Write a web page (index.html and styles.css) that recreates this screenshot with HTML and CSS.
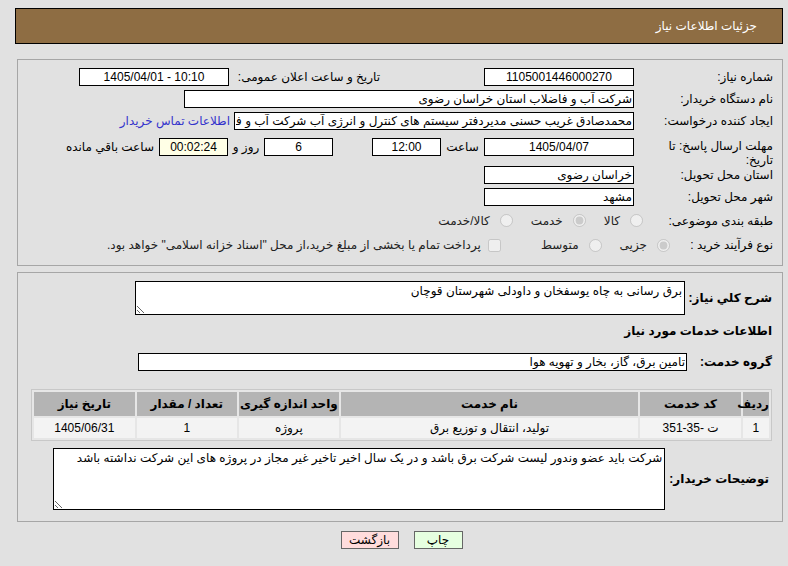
FILE: index.html
```html
<!DOCTYPE html>
<html lang="fa" dir="rtl">
<head>
    <meta charset="UTF-8">
    <title>جزئیات اطلاعات نیاز</title>
    <link rel="stylesheet" href="styles.css">
</head>
<body>
<div class="page">
    <div class="title-bar">جزئیات اطلاعات نیاز</div>

    <div class="panel info">
        <div class="row">
            <span class="lbl">شماره نیاز:</span>
            <input class="fld w150 center" value="1105001446000270" readonly>
            <span class="lbl2">تاریخ و ساعت اعلان عمومی:</span>
            <input class="fld w150 center" dir="ltr" value="1405/04/01 - 10:10" readonly>
        </div>
        <div class="row">
            <span class="lbl">نام دستگاه خریدار:</span>
            <input class="fld w450" value="شرکت آب و فاضلاب استان خراسان رضوی" readonly>
        </div>
        <div class="row">
            <span class="lbl">ایجاد کننده درخواست:</span>
            <input class="fld w400" value="محمدصادق غریب حسنی مدیردفتر سیستم های کنترل و انرژی آب شرکت آب و فاضلاب استان خراسان رضوی" readonly>
            <a class="contact" href="#">اطلاعات تماس خریدار</a>
        </div>
        <div class="row row-deadline">
            <span class="lbl">مهلت ارسال پاسخ: تا<br>تاریخ:</span>
            <input class="fld w150 center" value="1405/04/07" readonly>
            <span class="unit u-hour">ساعت</span>
            <input class="fld w68 center" value="12:00" readonly>
            <input class="fld w68 center gap-days" value="6" readonly>
            <span class="unit u-day">روز و</span>
            <input class="fld w68 center remain" value="00:02:24" readonly>
            <span class="unit u-left">ساعت باقي مانده</span>
        </div>
        <div class="row">
            <span class="lbl">استان محل تحویل:</span>
            <input class="fld w150" value="خراسان رضوی" readonly>
        </div>
        <div class="row">
            <span class="lbl">شهر محل تحویل:</span>
            <input class="fld w150" value="مشهد" readonly>
        </div>
        <div class="row row-radio">
            <span class="lbl lbl-cat">طبقه بندی موضوعی:</span>
            <label class="opt"><input type="radio" name="cat" disabled>کالا</label>
            <label class="opt"><input type="radio" name="cat" checked disabled>خدمت</label>
            <label class="opt"><input type="radio" name="cat" disabled>کالا/خدمت</label>
        </div>
        <div class="row row-radio last">
            <span class="lbl lbl-proc">نوع فرآیند خرید :</span>
            <label class="opt"><input type="radio" name="proc" checked disabled>جزیی</label>
            <label class="opt"><input type="radio" name="proc" disabled>متوسط</label>
            <label class="opt opt-check"><input type="checkbox" disabled>پرداخت تمام یا بخشی از مبلغ خرید،از محل "اسناد خزانه اسلامی" خواهد بود.</label>
        </div>
    </div>

    <div class="panel need">
        <div class="drow">
            <span class="blbl w-need">شرح کلي نیاز:</span>
            <textarea class="ta ta-need" readonly>برق رسانی به چاه یوسفخان و داودلی شهرستان قوچان</textarea>
        </div>
        <div class="subhead">اطلاعات خدمات مورد نیاز</div>
        <div class="drow group-row">
            <span class="blbl w-group">گروه خدمت:</span>
            <input class="fld w549" value="تامین برق، گاز، بخار و تهویه هوا" readonly>
        </div>

        <table class="items">
            <thead>
                <tr>
                    <th class="c-idx">ردیف</th>
                    <th class="c-code">کد خدمت</th>
                    <th class="c-name">نام خدمت</th>
                    <th class="c-unit">واحد اندازه گیری</th>
                    <th class="c-qty">تعداد / مقدار</th>
                    <th class="c-date">تاریخ نیاز</th>
                </tr>
            </thead>
            <tbody>
                <tr>
                    <td>1</td>
                    <td>ت -35-351</td>
                    <td>تولید، انتقال و توزیع برق</td>
                    <td>پروژه</td>
                    <td>1</td>
                    <td>1405/06/31</td>
                </tr>
            </tbody>
        </table>

        <div class="drow desc-row">
            <span class="blbl w-desc">توضیحات خریدار:</span>
            <textarea class="ta ta-desc" readonly>شرکت باید عضو وندور لیست شرکت برق باشد و در یک سال اخیر تاخیر غیر مجاز در پروژه های این شرکت نداشته باشد</textarea>
        </div>
    </div>

    <div class="actions">
        <button class="btn btn-print">چاپ</button>
        <button class="btn btn-back">بازگشت</button>
    </div>
</div>
</body>
</html>
```

FILE: styles.css
```css
body {
    margin: 0;
    background: #e1e1e1;
    font-family: "Liberation Sans", "DejaVu Sans", sans-serif;
    font-size: 12px;
    color: #000;
}
.page {
    padding: 8px 5px 0 15px;
}
.title-bar {
    background: #8e6d43;
    border: 1px solid #000;
    height: 34px;
    line-height: 34px;
    color: #fff;
    padding-right: 25px;
}
.panel {
    border: 1px solid #a6a6a6;
    margin: 15px 0 0 2px;
}
.info {
    padding: 6px 9px 8px 0;
}
.row {
    display: flex;
    align-items: center;
    height: 22px;
}
.lbl {
    width: 135px;
    margin-left: 4px;
    flex: none;
}
.lbl-cat {
    width: 126px;
}
.lbl-proc {
    width: 99px;
}
.lbl2 {
    width: 145px;
    margin-right: 104px;
    margin-left: 6px;
}
.fld {
    box-sizing: border-box;
    height: 18px;
    border: 1px solid #000;
    background: #fff;
    font: inherit;
    padding: 0 1px;
    flex: none;
}
.center {
    text-align: center;
}
.w150 { width: 150px; }
.w400 { width: 400px; }
.w450 { width: 450px; }
.w68 { width: 69px; }
.w549 { width: 549px; }
.contact {
    color: #3333cc;
    text-decoration: none;
    margin-right: 4px;
}
.row-deadline {
    height: 32px;
    align-items: flex-start;
    padding-top: 6px;
    box-sizing: border-box;
}
.row-deadline .lbl {
    line-height: 14px;
    margin-top: 1px;
}
.unit {
    line-height: 18px;
    text-align: center;
}
.u-hour { width: 43px; }
.u-day { width: 36px; }
.u-left { margin-right: 5px; }
.gap-days {
    margin-right: 39px;
}
.remain {
    background: #ffffe6;
}
.row-radio {
    height: 25px;
}
.row-radio.last {
    height: 24px;
}
.opt {
    display: flex;
    align-items: center;
    margin-left: 18px;
    color: #222;
}
.opt input {
    margin: 0 0 0 10px;
    width: 13px;
    height: 13px;
}
.opt-check {
    margin-right: 22px;
}
.opt-check input {
    margin-left: 7px;
}
.need {
    padding: 8px 10px 11px 13px;
    margin-top: 6px;
}
.drow {
    display: flex;
    align-items: center;
}
.blbl {
    font-weight: bold;
    font-size: 12px;
    white-space: nowrap;
    flex: none;
}
.w-need { width: 87px; }
.w-group { width: 85px; }
.w-desc {
    margin-right: 3px;
    margin-left: 4px;
}
.ta {
    box-sizing: border-box;
    border: 1px solid #000;
    background: #fff;
    font: inherit;
    padding: 2px;
    resize: vertical;
}
.ta-need {
    width: 550px;
    height: 34px;
}
.subhead {
    font-weight: bold;
    font-size: 12px;
    line-height: 16px;
    margin-top: 8px;
}
.group-row {
    margin-top: 14px;
}
.items {
    width: 741px;
    table-layout: fixed;
    margin-top: 18px;
    border: 1px solid #c8c8c8;
    border-spacing: 2px;
    background: #e6e6e6;
}
.items th {
    background: #b4b4b4;
    height: 24px;
    padding: 0;
    font-weight: bold;
    white-space: nowrap;
}
.items td {
    background: #f3f3f3;
    height: 20px;
    padding: 0;
    text-align: center;
}
.c-idx { width: 26px; }
.c-code { width: 100px; }
.c-name { width: 296px; }
.c-unit { width: 99px; }
.c-qty { width: 100px; }
.c-date { width: 100px; }
.desc-row {
    margin-top: 7px;
    padding-left: 22px;
}
.ta-desc {
    flex: 1;
    min-width: 0;
    height: 62px;
}
.actions {
    display: flex;
    justify-content: center;
    gap: 15px;
    margin: 9px 0 0 5px;
}
.btn {
    font: inherit;
    height: 18px;
    padding: 0;
    border: 1px solid #666;
    cursor: pointer;
}
.btn-print {
    width: 49px;
    background: #e6ffe0;
}
.btn-back {
    width: 58px;
    background: #ffdcdc;
}
```
